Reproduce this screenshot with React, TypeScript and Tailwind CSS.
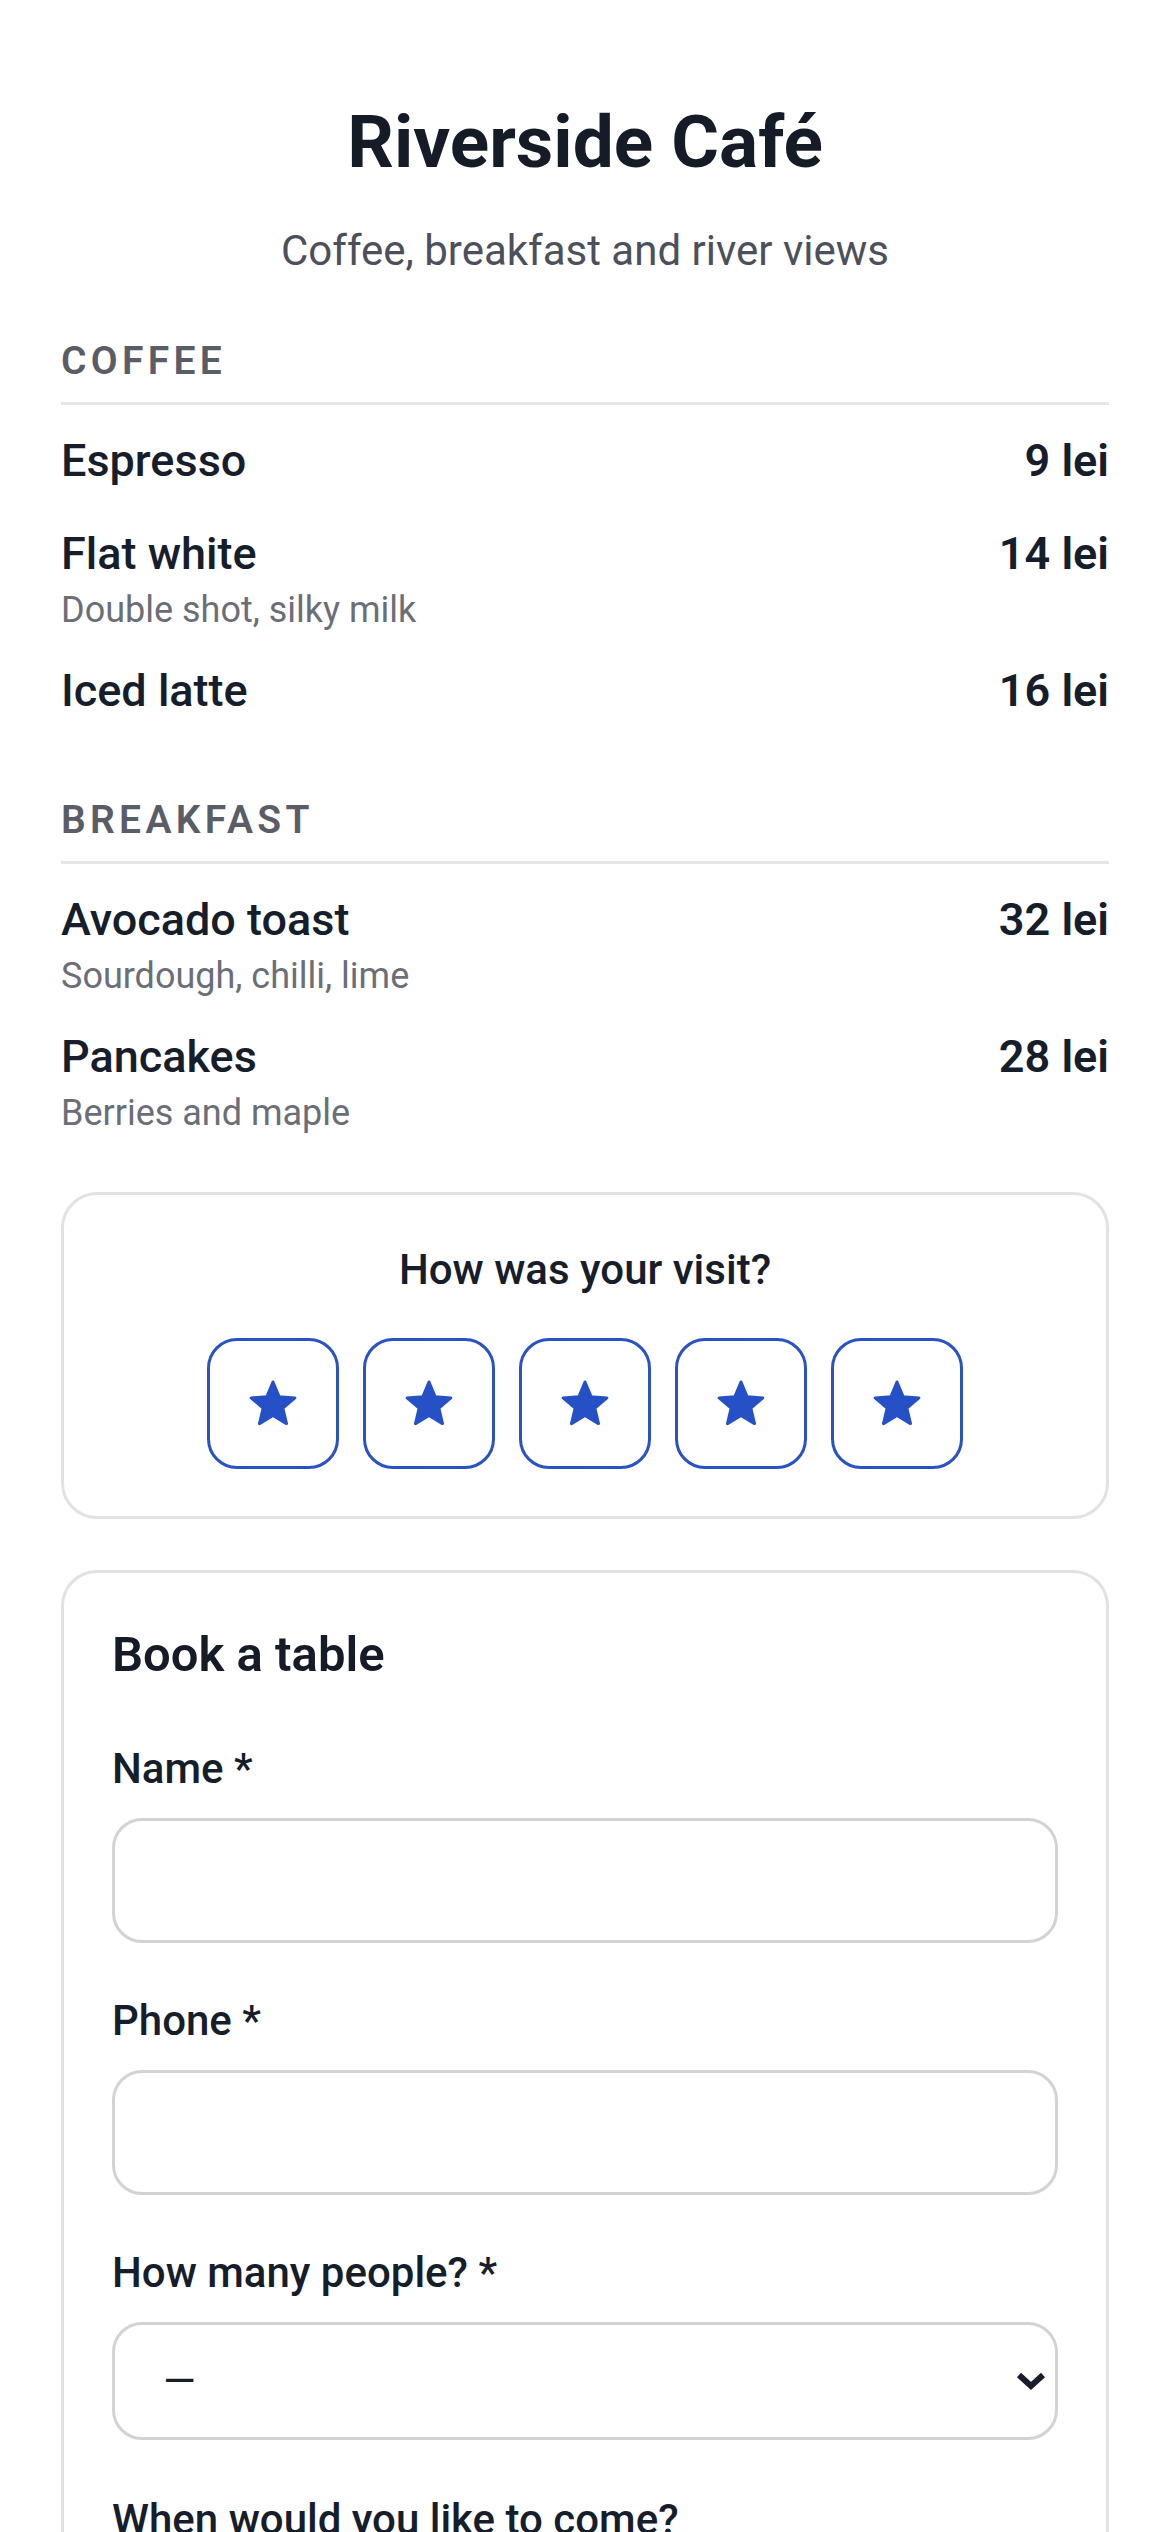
import React from "react";

const coffee = [
  { name: "Espresso", price: "9 lei" },
  { name: "Flat white", price: "14 lei", desc: "Double shot, silky milk" },
  { name: "Iced latte", price: "16 lei" },
];

const breakfast = [
  { name: "Avocado toast", price: "32 lei", desc: "Sourdough, chilli, lime" },
  { name: "Pancakes", price: "28 lei", desc: "Berries and maple" },
];

type Item = { name: string; price: string; desc?: string };

function Section({ title, items, className }: { title: string; items: Item[]; className: string }) {
  return (
    <section className={className}>
      <h2 className="border-b-[3px] border-[#e6e6e6] pb-[17px] text-[39px] font-semibold uppercase leading-[48px] tracking-[0.11em] text-[#5a5d67]">
        {title}
      </h2>
      <ul className="mt-[9px]">
        {items.map((it) => (
          <li key={it.name} className="py-[15px]">
            <div className="flex items-start justify-between">
              <span className="text-[45px] font-medium leading-[63px] text-[#161d2b]">{it.name}</span>
              <span className="text-[45px] font-semibold leading-[63px] text-[#161d2b]">{it.price}</span>
            </div>
            {it.desc && <p className="mt-[6px] text-[36px] leading-[38px] text-[#6b6e77]">{it.desc}</p>}
          </li>
        ))}
      </ul>
    </section>
  );
}

function Star() {
  return (
    <svg width="50" height="50" viewBox="0 0 50 50" aria-hidden="true">
      <polygon
        points="25,3 31.08,17.63 46.87,18.89 34.84,29.2 38.52,44.61 25,36.35 11.48,44.61 15.16,29.2 3.13,18.89 18.92,17.63"
        fill="#2550c6"
        stroke="#2550c6"
        strokeWidth="3"
        strokeLinejoin="round"
      />
    </svg>
  );
}

function Field({ label, children, className }: { label: string; children: React.ReactNode; className: string }) {
  return (
    <div className={className}>
      <label className="block text-[42px] font-medium leading-[56px] text-[#161d2b]">{label}</label>
      <div className="mt-[21px]">{children}</div>
    </div>
  );
}

export default function App() {
  return (
    <div className="min-h-screen bg-white px-[61px] pb-[120px] pt-[98px] font-['Roboto','Inter',sans-serif] text-[#161d2b]">
      <header className="text-center">
        <h1 className="text-[73px] font-bold leading-[88px] text-[#151c28]">Riverside Café</h1>
        <p className="mt-[37px] text-[42px] leading-[56px] text-[#4b505c]">Coffee, breakfast and river views</p>
      </header>

      <Section title="Coffee" items={coffee} className="mt-[58px]" />
      <Section title="Breakfast" items={breakfast} className="mt-[59px]" />

      <div className="mt-[45px] rounded-[36px] border-[3px] border-[#e2e2e2] px-[48px] pb-[47px] pt-[47px]">
        <p className="text-center text-[42px] font-medium leading-[56px] text-[#161d2b]">How was your visit?</p>
        <div className="mt-[40px] flex justify-center gap-[24px]">
          {[1, 2, 3, 4, 5].map((n) => (
            <button
              key={n}
              type="button"
              aria-label={`${n} stars`}
              className="flex h-[131px] w-[132px] items-center justify-center rounded-[30px] border-[3px] border-[#2a52c4] bg-white"
            >
              <Star />
            </button>
          ))}
        </div>
      </div>

      <div className="mt-[51px] rounded-[36px] border-[3px] border-[#e2e2e2] px-[48px] pb-[60px] pt-[52px]">
        <h2 className="text-[49px] font-semibold leading-[60px] text-[#151c28]">Book a table</h2>

        <Field label="Name *" className="mt-[56px]">
          <input type="text" className="block h-[125px] w-full rounded-[30px] border-[3px] border-[#d3d3d3] bg-white px-[45px] text-[42px] outline-none" />
        </Field>

        <Field label="Phone *" className="mt-[50px]">
          <input type="tel" className="block h-[125px] w-full rounded-[30px] border-[3px] border-[#d3d3d3] bg-white px-[45px] text-[42px] outline-none" />
        </Field>

        <Field label="How many people? *" className="mt-[50px]">
          <div className="relative">
            <select
              defaultValue=""
              className="block h-[118px] w-full appearance-none rounded-[30px] border-[3px] border-[#d3d3d3] bg-white pl-[48px] pr-[80px] text-[42px] text-[#161d2b] outline-none"
            >
              <option value="">—</option>
              <option value="1">1</option>
              <option value="2">2</option>
              <option value="3">3</option>
              <option value="4">4</option>
            </select>
            <svg
              className="pointer-events-none absolute right-[12px] top-1/2 -translate-y-1/2"
              width="30"
              height="20"
              viewBox="0 0 30 20"
              aria-hidden="true"
            >
              <polyline points="3,4 15,15 27,4" fill="none" stroke="#161d2b" strokeWidth="6" strokeLinejoin="miter" />
            </svg>
          </div>
        </Field>

        <Field label="When would you like to come?" className="mt-[52px]">
          <input type="text" className="block h-[125px] w-full rounded-[30px] border-[3px] border-[#d3d3d3] bg-white px-[45px] text-[42px] outline-none" />
        </Field>
      </div>
    </div>
  );
}
